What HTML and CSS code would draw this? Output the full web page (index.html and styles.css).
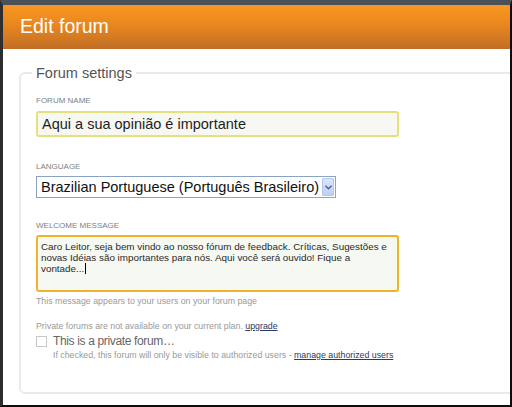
FILE: index.html
```html
<!DOCTYPE html>
<html lang="en">
<head>
<meta charset="utf-8">
<title>Edit forum</title>
<link rel="stylesheet" href="styles.css">
</head>
<body>
<div class="window">
  <header class="titlebar">
    <h1 class="title">Edit forum</h1>
  </header>
  <main class="content">
    <fieldset class="settings">
      <legend class="settings-legend">Forum settings</legend>

      <div class="field field-name">
        <label class="field-label">Forum name</label>
        <div class="text-input">Aqui a sua opinião é importante</div>
      </div>

      <div class="field field-lang">
        <label class="field-label">Language</label>
        <div class="select">
          <span class="select-value">Brazilian Portuguese (Português Brasileiro)</span>
          <span class="select-arrow">
            <svg width="7" height="5" viewBox="0 0 7 5"><path d="M0.5 0.8 L3.5 3.8 L6.5 0.8" fill="none" stroke="#4d6185" stroke-width="1.4"/></svg>
          </span>
        </div>
      </div>

      <div class="field field-welcome">
        <label class="field-label">Welcome message</label>
        <div class="textarea">Caro Leitor, seja bem vindo ao nosso fórum de feedback. Críticas, Sugestões e novas Idéias são importantes para nós. Aqui você será ouvido! Fique a vontade...<span class="caret"></span></div>
        <p class="hint">This message appears to your users on your forum page</p>
      </div>

      <p class="hint plan-note">Private forums are not available on your current plan. <a class="link" href="#">upgrade</a></p>
      <div class="check-row">
        <span class="checkbox"></span>
        <span class="check-label">This is a private forum…</span>
      </div>
      <p class="hint check-hint">If checked, this forum will only be visible to authorized users - <a class="link" href="#">manage authorized users</a></p>
    </fieldset>
  </main>
</div>
</body>
</html>
```

FILE: styles.css
```css
* { box-sizing: border-box; }
html, body { margin: 0; padding: 0; background: #fff; }
body { font-family: "Liberation Sans", Arial, sans-serif; }

.window {
  width: 512px;
  height: 407px;
  display: flex;
  flex-direction: column;
  border-top: 5px solid #4b5159;
  border-left: 3px solid #2e2e2e;
  border-right: 2px solid #0d0d0d;
  border-bottom: 2px solid #0d0d0d;
  overflow: hidden;
  background: #fff;
}

.titlebar {
  height: 44px;
  flex: none;
  display: flex;
  align-items: center;
  padding-left: 17px;
  background: linear-gradient(to bottom, #f8971f 0%, #e9871f 45%, #c06e25 100%);
}
.title {
  margin: 0;
  font-size: 19.5px;
  font-weight: normal;
  color: #fff;
  line-height: 1;
}

.content {
  flex: 1;
  padding-left: 16px;
  overflow: hidden;
}

.settings {
  margin: 16px -40px 0 0;
  padding: 15px 0 31px 15px;
  border: 2px solid #ebebe4;
  border-radius: 6px;
  min-width: 0;
}
.settings-legend {
  font-size: 14.5px;
  line-height: 16px;
  color: #555;
  padding: 0 4px;
  margin-left: -4px;
}

.field-label {
  display: block;
  font-size: 8px;
  line-height: 10px;
  text-transform: uppercase;
  color: #808080;
  margin-bottom: 4px;
}
.field-name .field-label { margin-bottom: 5px; }

.field-name { margin-bottom: 25px; }
.field-lang { margin-bottom: 23px; }

.text-input {
  width: 363px;
  height: 26px;
  border: 2px solid #e3e27c;
  border-radius: 3px;
  background: #f6f8f1;
  padding: 0 4px;
  font-size: 14.5px;
  line-height: 22px;
  color: #1e1e1e;
}

.select {
  width: 300px;
  height: 22px;
  border: 1px solid #8aa4c4;
  background: #fff;
  display: flex;
  align-items: stretch;
  padding: 1px;
}
.select-value {
  flex: 1;
  padding-left: 3px;
  font-size: 14.5px;
  line-height: 18px;
  color: #111;
  white-space: nowrap;
  overflow: hidden;
}
.select-arrow {
  width: 12px;
  flex: none;
  display: flex;
  align-items: center;
  justify-content: center;
  background: linear-gradient(to bottom, #dbe6fd, #bccff7);
  border: 1px solid #b4c7ee;
  border-radius: 1px;
}

.textarea {
  width: 363px;
  height: 57px;
  border: 2px solid #f0b42a;
  border-radius: 3px;
  background: #f6f8f2;
  padding: 4px 4px 4px 3px;
  font-size: 9.85px;
  line-height: 11px;
  color: #2a2a2a;
}
.caret {
  display: inline-block;
  width: 1px;
  height: 11px;
  background: #000;
  vertical-align: -2px;
  margin-left: 1px;
}

.hint {
  margin: 4px 0 0;
  font-size: 8.8px;
  line-height: 11px;
  color: #999;
}
.plan-note { margin-top: 14px; }
.link { color: #2c3a5e; text-decoration: underline; }

.check-row {
  display: flex;
  align-items: center;
  gap: 6px;
  margin-top: 2px;
  height: 14px;
}
.checkbox {
  width: 11px;
  height: 11px;
  border: 1px solid #c6c6c6;
  background: #fff;
  flex: none;
}
.check-label {
  font-size: 12px;
  letter-spacing: -0.35px;
  line-height: 14px;
  color: #666;
}
.check-hint {
  margin-top: 2px;
  padding-left: 17px;
}
```
